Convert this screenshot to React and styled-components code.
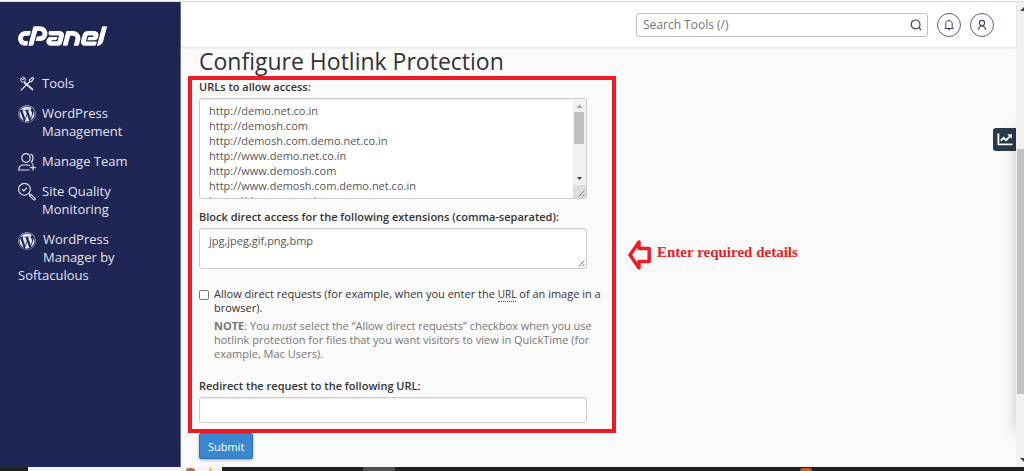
import React, { useState } from 'react';
import styled, { createGlobalStyle, css } from 'styled-components';
import { FaWordpress } from 'react-icons/fa';
import { SiCpanel } from 'react-icons/si';

const GlobalStyle = createGlobalStyle`
  *, *::before, *::after {
    box-sizing: border-box;
  }

  body {
    margin: 0;
    background: #fafafa;
    color: #333;
    font-family: 'Open Sans', 'Noto Sans', sans-serif;
    font-size: 11px;
    line-height: 14px;
  }
`;

const Screen = styled.div`
  display: flex;
  flex-direction: column;
  min-height: 100vh;
`;

const TopEdge = styled.div`
  height: 2px;
  background: #fff;
  border-bottom: 1px solid #dcdcdc;
`;

const Page = styled.div`
  flex: 1;
  display: flex;
`;

/* Sidebar */

const Sidebar = styled.aside`
  flex: none;
  width: 181px;
  padding: 24px 18px;
  background: #1f2654;
  border-right: 1px solid #6c6f94;
`;

const LogoLink = styled.a`
  display: block;
  color: #fff;
  height: 48px;

  svg {
    display: block;
    width: 89px;
    height: 20px;
  }
`;

const Menu = styled.nav`
  display: flex;
  flex-direction: column;
  gap: 12px;
`;

const MenuLink = styled.a`
  display: ${props => (props.$wrap ? 'block' : 'flex')};
  gap: 6px;
  color: #e3e4ec;
  font-size: 13px;
  line-height: 18px;
  text-decoration: none;

  svg {
    flex: none;
    width: 18px;
    height: 18px;
    margin: 1px 0 -1px;
    ${props => props.$wrap && css`
      float: left;
      height: 20px;
      margin-right: 7px;
    `}
  }

  &:hover {
    color: #fff;
  }
`;

/* Header */

const Main = styled.main`
  flex: 1;
  min-width: 0;
  position: relative;
  background: #fafafa;
`;

const Header = styled.header`
  display: flex;
  justify-content: flex-end;
  align-items: center;
  gap: 9px;
  height: 45px;
  padding-right: 22px;
  background: #fff;
  box-shadow: 0 1px 2px rgba(0, 0, 0, 0.12);
`;

const SearchBox = styled.form`
  display: flex;
  align-items: center;
  width: 292px;
  height: 24px;
  border: 1px solid #bdbccb;
  border-radius: 3px;
  background: #fff;
`;

const SearchInput = styled.input`
  flex: 1;
  min-width: 0;
  border: none;
  outline: none;
  padding: 0 6px;
  background: transparent;
  color: #333;
  font: 12px 'Open Sans', sans-serif;

  &::placeholder {
    color: #757575;
  }
`;

const SearchButton = styled.button`
  display: flex;
  padding: 0 5px;
  border: none;
  background: none;
  color: #2f4858;
  cursor: pointer;
`;

const RoundButton = styled.button`
  display: flex;
  align-items: center;
  justify-content: center;
  width: 24px;
  height: 24px;
  padding: 0;
  border: 1px solid #5b5d87;
  border-radius: 50%;
  background: #fff;
  color: #3c3f70;
  cursor: pointer;
`;

/* Form */

const Content = styled.div`
  padding: 0 7px 8px;
`;

const Title = styled.h1`
  margin: 0;
  padding: 0 11px;
  font-size: 23px;
  font-weight: 400;
  line-height: 29px;
`;

const FrameRow = styled.div`
  display: flex;
  align-items: center;
  gap: 12px;
`;

const Frame = styled.div`
  width: 100%;
  max-width: 428px;
  padding: 0 6px 6px 7px;
  border: 4px solid #ed1c24;
`;

const Field = styled.div`
  display: flex;
  flex-direction: column;
  max-width: 388px;
  margin-bottom: ${props => props.$space || 0}px;
`;

const Label = styled.label`
  padding-bottom: 4px;
  font-weight: 600;
`;

const boxStyle = css`
  border: 1px solid #ccc;
  border-radius: 3px;
  background: #fff;
  box-shadow: inset 0 1px 1px rgba(0, 0, 0, 0.08);
`;

const TextAreaBox = styled.div`
  ${boxStyle}
  display: flex;
  height: ${props => props.$height}px;
  overflow: hidden;
`;

const TextArea = styled.textarea`
  flex: 1;
  min-width: 0;
  border: none;
  outline: none;
  padding: 4px 9px;
  background: transparent;
  color: #555;
  font: 11px/15px 'Open Sans', sans-serif;
  resize: none;
  scrollbar-width: none;
`;

const Rail = styled.div`
  flex: none;
  display: flex;
  flex-direction: column;
  width: 13px;
  background: #f1f1f1;

  svg {
    flex: none;
  }
`;

const RailTrack = styled.div`
  flex: 1;
  padding: 0 2px 0 1px;
`;

const RailThumb = styled.div`
  height: 32px;
  background: #c1c1c1;
`;

const Corner = styled.div`
  display: flex;
  align-self: flex-end;
  width: 13px;
  height: 13px;
  background: ${props => (props.$filled ? '#dcdcdc' : 'transparent')};
`;

const TextInput = styled.input`
  ${boxStyle}
  width: 100%;
  height: 26px;
  padding: 4px 9px;
  color: #555;
  font: 11px/15px 'Open Sans', sans-serif;
`;

const CheckRow = styled.div`
  display: flex;
  align-items: flex-start;
  gap: 5px;
  margin-bottom: 18px;
`;

const Checkbox = styled.input`
  flex: none;
  appearance: none;
  width: 10px;
  height: 10px;
  margin: 3px 0 0;
  border: 1px solid #767676;
  border-radius: 2px;
  background: #fff;

  &:checked {
    background: #3a87cf;
  }
`;

const Abbr = styled.abbr`
  font-size: 10px;
  text-decoration: none;
  border-bottom: 1px dotted #555;
`;

const Note = styled.p`
  margin: 4px 0 0;
  color: #777;
`;

const Callout = styled.div`
  display: flex;
  align-items: center;
  gap: 6px;
  color: #ed1c24;
  font: bold 15px 'Liberation Serif', serif;

  span {
    padding-bottom: 5px;
  }
`;

const SubmitButton = styled.button`
  display: block;
  height: 26px;
  margin-left: 11px;
  padding: 0 8px;
  border: 1px solid #2e72b5;
  border-radius: 2px;
  background: #3a87cf;
  box-shadow: 0 1px 3px rgba(0, 0, 0, 0.35);
  color: #fff;
  font: 11px 'Open Sans', sans-serif;
  cursor: pointer;
`;

/* Right edge */

const StatsPanel = styled.div`
  position: absolute;
  top: 126px;
  right: 0;
  bottom: 36px;
  width: 23px;
  clip-path: inset(-20px 0 -20px -20px);

  &::after {
    content: '';
    position: absolute;
    inset: 0 -8px 0 23px;
    box-shadow: 0 0 14px rgba(0, 0, 0, 0.25);
  }
`;

const StatsButton = styled.button`
  display: flex;
  align-items: center;
  justify-content: center;
  width: 23px;
  height: 23px;
  padding: 0;
  border: none;
  border-radius: 3px 0 0 3px;
  background: #293a4a;
  color: #fff;
  cursor: pointer;
`;

const ScrollRail = styled.div`
  flex: none;
  display: flex;
  flex-direction: column;
  align-items: flex-end;
  justify-content: space-between;
  width: 8px;
  padding: 5px 0;
  background: #f1f1f1;
`;

const ScrollThumb = styled.div`
  width: 7px;
  flex: 0 0 54%;
  margin-top: 74px;
  background: #c1c1c1;
`;

/* Taskbar */

const Taskbar = styled.div`
  display: flex;
  height: 4px;
  background: #221f22;
`;

const TaskItem = styled.div`
  display: flex;
  justify-content: flex-end;
  gap: 14px;
  width: ${props => props.$width}px;
  margin-left: ${props => props.$gap}px;
  padding-right: 10px;
  background: ${props => props.$color};
`;

const TaskDot = styled.span`
  width: ${props => props.$width}px;
  height: 3px;
  align-self: flex-end;
  margin-left: ${props => props.$gap || 0}px;
  border-radius: 3px 3px 0 0;
  background: ${props => props.$color};
`;

const ToolsIcon = () => (
  <svg viewBox="0 0 18 18" fill="none" stroke="currentColor" strokeLinecap="round">
    <path d="M6.500 7.500 14.500 14.500" strokeWidth="1.700" />
    <path d="M3 3.200 4.800 5 6.200 3.600 4.600 2.200C6.400 1.800 8 3.400 7 5.600L5.600 7C3.600 7.600 2 6 3 3.200" strokeWidth="1" />
    <path d="M3.200 15 12 6.300M11.600 6.700V4.600L14.600 2.600 15.600 3.600 13.600 6.600H11.600" strokeWidth="1.200" />
  </svg>
);

const TeamIcon = () => (
  <svg viewBox="0 0 18 18" fill="none" stroke="currentColor" strokeWidth="1.2">
    <ellipse cx="8" cy="5" rx="4.2" ry="4.4" />
    <path d="M12.4 1c3.4.8 3.4 7 .4 8.2" />
    <path d="M11.5 17H.7c0-3 2.1-5 5.1-5h3.6c1.1 0 1.9.3 2.7.8M12.2 14.6h5.6M15 11.8v5.6M13.6 10.4l1.6.4" />
  </svg>
);

const QualityIcon = () => (
  <svg viewBox="0 0 18 18" fill="none" stroke="currentColor" strokeWidth="1.1">
    <circle cx="6.5" cy="6.3" r="5.9" />
    <path d="M4 6.3 5.8 8 9 4.6" strokeWidth="1.2" />
    <path d="M10.8 10.4 12.4 12" />
    <path d="M11.6 12.8 13 11.4 17 15.2c.8.9-.5 2.3-1.500 1.400z" />
  </svg>
);

const SearchIcon = () => (
  <svg width="12" height="12" viewBox="0 0 12 12" fill="none" stroke="currentColor" strokeWidth="1.2">
    <circle cx="5.6" cy="5.4" r="4.4" />
    <path d="M8.8 8.6 11.2 11" />
  </svg>
);

const BellIcon = () => (
  <svg width="12" height="12" viewBox="0 0 12 12" fill="none" stroke="currentColor" strokeWidth="1">
    <path d="M1.5 9.500h9M2.800 9.500V5C2.800 3 4.100 1.700 6 1.700S9.200 3 9.200 5v4.500M6 1.700V.7M5 10.800h2" />
  </svg>
);

const UserIcon = () => (
  <svg width="12" height="12" viewBox="0 0 12 12" fill="none" stroke="currentColor" strokeWidth="1.1">
    <circle cx="6" cy="4" r="2.6" />
    <path d="M2.6 11c0-2.4 1.400-4 3.400-4s3.400 1.600 3.400 4" />
  </svg>
);

const ChartIcon = () => (
  <svg width="16" height="13" viewBox="0 0 16 13" fill="none" stroke="currentColor" strokeWidth="1.8">
    <path d="M1.4.5v10.8h14.1" />
    <path d="M3.8 7.6 6.6 4.8 9 7.2 12.6 3.6" />
    <path d="M10.2 1.2h4.6v4.6z" fill="currentColor" stroke="none" />
  </svg>
);

const LeftArrow = () => (
  <svg width="23" height="32" viewBox="0 0 23 32" fill="none" stroke="currentColor" strokeWidth="3.5" strokeLinejoin="round">
    <path d="M2 16 11 3v6.500h10.200v13H11V29z" />
  </svg>
);

const RailArrow = ({ down }) => (
  <svg width="13" height="13" viewBox="0 0 13 13">
    {down ? <path d="M4 5h5L6.500 8z" fill="#404040" /> : <path d="M3.500 9h6L6.500 5.500z" fill="#a3a3a3" />}
  </svg>
);

const ResizeCorner = ({ filled }) => (
  <Corner $filled={filled}>
    <svg width="13" height="13" viewBox="0 0 13 13" stroke="#808080">
      <path d="M5.500 11.500 11.500 5.500M9 11.500 11.500 9" />
    </svg>
  </Corner>
);

const ScrollingTextArea = ({ height, ...props }) => {
  const [offset, setOffset] = useState(0);

  // Thumb position follows the scrolled share of the text
  const handleScroll = e => {
    const { scrollTop, scrollHeight, clientHeight } = e.target;
    setOffset((scrollTop / (scrollHeight - clientHeight)) * (height - 73));
  };

  return (
    <TextAreaBox $height={height}>
      <TextArea onScroll={handleScroll} {...props} />
      <Rail>
        <RailArrow />
        <RailTrack>
          <RailThumb style={{ marginTop: offset }} />
        </RailTrack>
        <RailArrow down />
        <ResizeCorner filled />
      </Rail>
    </TextAreaBox>
  );
};

const allowedUrls = ['http://', 'http://www.', 'https://', 'https://www.']
  .map(prefix => ['demo.net.co.in', 'demosh.com', 'demosh.com.demo.net.co.in'].map(host => prefix + host))
  .flat()
  .join('\n');

const App = () => {
  const [urls, setUrls] = useState(allowedUrls);
  const [extensions, setExtensions] = useState('jpg,jpeg,gif,png,bmp');
  const [allowDirect, setAllowDirect] = useState(false);
  const [redirectUrl, setRedirectUrl] = useState('');

  return (
    <Screen>
      <GlobalStyle />
      <TopEdge />
      <Page>
        <Sidebar>
          <LogoLink href="#home" aria-label="cPanel">
            <SiCpanel viewBox="0 9.3 24 5.4" />
          </LogoLink>
          <Menu>
            <MenuLink href="#tools"><ToolsIcon />Tools</MenuLink>
            <MenuLink href="#wordpress"><FaWordpress />WordPress Management</MenuLink>
            <MenuLink href="#team"><TeamIcon />Manage Team</MenuLink>
            <MenuLink href="#quality"><QualityIcon />Site Quality Monitoring</MenuLink>
            <MenuLink href="#softaculous" $wrap><FaWordpress />WordPress Manager by Softaculous</MenuLink>
          </Menu>
        </Sidebar>

        <Main>
          <Header>
            <SearchBox onSubmit={e => e.preventDefault()}>
              <SearchInput type="text" placeholder="Search Tools (/)" aria-label="Search Tools" />
              <SearchButton type="submit" aria-label="Search"><SearchIcon /></SearchButton>
            </SearchBox>
            <RoundButton type="button" aria-label="Notifications"><BellIcon /></RoundButton>
            <RoundButton type="button" aria-label="Account"><UserIcon /></RoundButton>
          </Header>

          <Content>
            <Title>Configure Hotlink Protection</Title>
            <form onSubmit={e => e.preventDefault()}>
              <FrameRow>
                <Frame>
                  <Field $space={11}>
                    <Label htmlFor="urls">URLs to allow access:</Label>
                    <ScrollingTextArea id="urls" height={101} value={urls} onChange={e => setUrls(e.target.value)} />
                  </Field>
                  <Field $space={18}>
                    <Label htmlFor="extensions">Block direct access for the following extensions (comma-separated):</Label>
                    <TextAreaBox $height={41}>
                      <TextArea id="extensions" value={extensions} onChange={e => setExtensions(e.target.value)} />
                      <ResizeCorner />
                    </TextAreaBox>
                  </Field>
                  <CheckRow>
                    <Checkbox
                      id="allow-direct"
                      type="checkbox"
                      checked={allowDirect}
                      onChange={e => setAllowDirect(e.target.checked)}
                    />
                    <div>
                      <label htmlFor="allow-direct">
                        Allow direct requests (for example, when you enter the <Abbr title="Uniform Resource Locator">URL</Abbr> of an image in a browser).
                      </label>
                      <Note>
                        <strong>NOTE</strong>: You <em>must</em> select the “Allow direct requests” checkbox when you use
                        hotlink protection for files that you want visitors to view in QuickTime (for example, Mac Users).
                      </Note>
                    </div>
                  </CheckRow>
                  <Field>
                    <Label htmlFor="redirect">Redirect the request to the following URL:</Label>
                    <TextInput id="redirect" type="text" value={redirectUrl} onChange={e => setRedirectUrl(e.target.value)} />
                  </Field>
                </Frame>
                <Callout><LeftArrow /><span>Enter required details</span></Callout>
              </FrameRow>
              <SubmitButton type="submit">Submit</SubmitButton>
            </form>
          </Content>

          <StatsPanel>
            <StatsButton type="button" aria-label="Statistics"><ChartIcon /></StatsButton>
          </StatsPanel>
        </Main>

        <ScrollRail>
          <svg width="4" height="4" viewBox="0 0 4 4"><path d="M0 4 4 0v4z" fill="#404040" /></svg>
          <ScrollThumb />
          <svg width="4" height="4" viewBox="0 0 4 4"><path d="M0 0h4v4z" fill="#404040" /></svg>
        </ScrollRail>
      </Page>
      <Taskbar>
        <TaskItem $width={194} $gap={28} $color="#f3f3f3">
          <TaskDot $width={9} $color="#b5714a" />
          <TaskDot $width={3} $color="#f0c040" />
        </TaskItem>
        <TaskItem $width={32} $gap={141} $color="#504e52" />
        <TaskDot $width={12} $gap={405} $color="#d8571c" />
      </Taskbar>
    </Screen>
  );
};

export default App;
